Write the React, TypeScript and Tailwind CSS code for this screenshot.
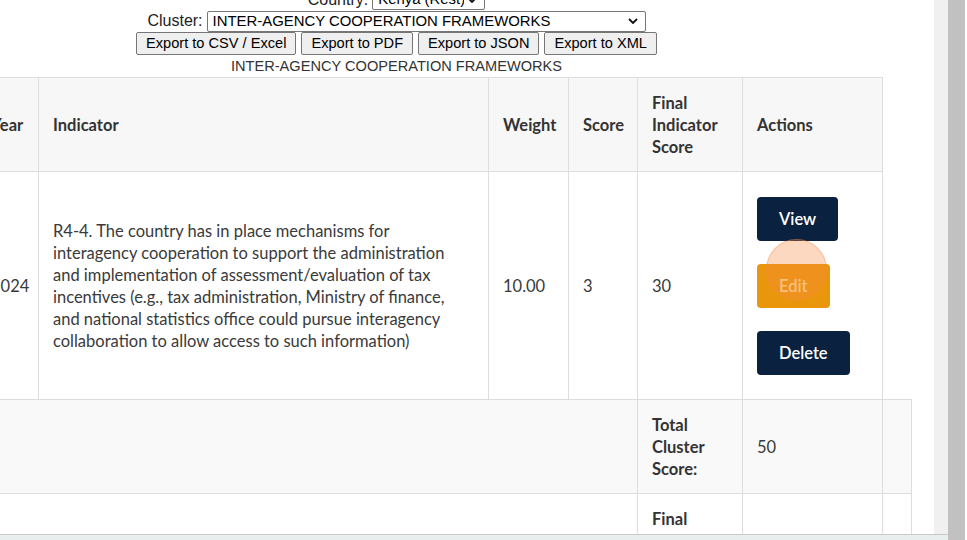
import React from 'react';

const Chevron = () => (
    <svg width="10" height="6" viewBox="0 0 10 6" className="shrink-0">
        <polyline points="1,1 5,5 9,1" fill="none" stroke="#111" strokeWidth="1.8" />
    </svg>
);

const FakeSelect = ({ label, width }: { label: string; width: string }) => (
    <div className={`${width} h-[21px] flex items-center justify-between gap-[3px] border border-[#767676] rounded-[2px] bg-white pl-[5px] pr-[7px] text-[14.9px] text-black`}>
        <span className="whitespace-nowrap overflow-hidden">{label}</span>
        <Chevron />
    </div>
);

const ExportButton = ({ children }: { children: React.ReactNode }) => (
    <button className="h-[23px] px-[9px] border border-[#767676] rounded-[2px] bg-[#efefef] text-[14.6px] text-black leading-none">
        {children}
    </button>
);

const ActionButton = ({ children, tone }: { children: React.ReactNode; tone: 'navy' | 'orange' }) => (
    <button
        className={
            tone === 'navy'
                ? 'h-[44px] px-[22px] rounded-[4px] bg-[#0a2240] text-white font-semibold self-start'
                : 'relative h-[44px] px-[22px] rounded-[4px] bg-[#e9960d] text-[#fbdc9c] font-semibold self-start'
        }
    >
        {children}
        {tone === 'orange' && (
            <span className="absolute left-[9px] top-[-25px] w-[61px] h-[61px] rounded-full bg-[rgba(249,138,64,0.33)] border border-[rgba(240,140,70,0.35)]" />
        )}
    </button>
);

const th = 'border border-[#dddddd] px-[14px] pt-[14px] pb-[13px] text-left align-middle font-bold text-[#333]';
const td = 'border border-[#dddddd] px-[14px] pt-[14px] pb-[13px] align-middle';

export default function App() {
    return (
        <div className="w-[967px] h-[540px] overflow-hidden bg-white flex">
            <div className="w-[948px] flex flex-col">
                <div className="h-[534px] flex">
                    <div className="w-[934px] overflow-hidden">
                        <div className="mt-[-11px] font-['Liberation_Sans',Arial,sans-serif] text-[16px] text-[#222]">
                            <div className="w-[793px] flex flex-col items-center">
                                <div className="h-[21px] flex items-center gap-[4px]">
                                    <span>Country:</span>
                                    <FakeSelect label="Kenya (Rest)" width="w-[113px]" />
                                </div>
                                <div className="h-[22px] flex items-center gap-[4px]">
                                    <span>Cluster:</span>
                                    <FakeSelect label="INTER-AGENCY COOPERATION FRAMEWORKS" width="w-[439px]" />
                                </div>
                                <div className="h-[23px] flex items-center gap-[5px]">
                                    <ExportButton>Export to CSV / Excel</ExportButton>
                                    <ExportButton>Export to PDF</ExportButton>
                                    <ExportButton>Export to JSON</ExportButton>
                                    <ExportButton>Export to XML</ExportButton>
                                </div>
                                <div className="h-[23px] flex items-center text-[14.6px] text-[#333]">
                                    INTER-AGENCY COOPERATION FRAMEWORKS
                                </div>
                            </div>
                            <table className="ml-[-24px] mt-[-1px] w-[935px] table-fixed border-collapse font-['Lato','Open_Sans',sans-serif] text-[16.5px] leading-[22px] text-[#3a3a3a]">
                                <colgroup>
                                    <col className="w-[62px]" />
                                    <col className="w-[450px]" />
                                    <col className="w-[80px]" />
                                    <col className="w-[69px]" />
                                    <col className="w-[105px]" />
                                    <col className="w-[140px]" />
                                    <col className="w-[29px]" />
                                </colgroup>
                                <thead>
                                    <tr className="bg-[#f7f7f7]">
                                        <th className={th}>Year</th>
                                        <th className={th}>Indicator</th>
                                        <th className={th}>Weight</th>
                                        <th className={th}>Score</th>
                                        <th className={th}>Final Indicator Score</th>
                                        <th className={th}>Actions</th>
                                    </tr>
                                </thead>
                                <tbody>
                                    <tr>
                                        <td className={td}>2024</td>
                                        <td className={td}>
                                            R4-4. The country has in place mechanisms for<br />
                                            interagency cooperation to support the administration<br />
                                            and implementation of assessment/evaluation of tax<br />
                                            incentives (e.g., tax administration, Ministry of finance,<br />
                                            and national statistics office could pursue interagency<br />
                                            collaboration to allow access to such information)
                                        </td>
                                        <td className={td}>10.00</td>
                                        <td className={td}>3</td>
                                        <td className={td}>30</td>
                                        <td className={td}>
                                            <div className="my-[11px] flex flex-col gap-[23px]">
                                                <ActionButton tone="navy">View</ActionButton>
                                                <ActionButton tone="orange">Edit</ActionButton>
                                                <ActionButton tone="navy">Delete</ActionButton>
                                            </div>
                                        </td>
                                    </tr>
                                    <tr className="bg-[#f9f9f9]">
                                        <td className={td} colSpan={4}></td>
                                        <td className={`${td} font-bold text-[#333]`}>Total Cluster Score:</td>
                                        <td className={td}>50</td>
                                        <td className={td}></td>
                                    </tr>
                                    <tr>
                                        <td className={td} colSpan={4}></td>
                                        <td className={`${td} font-bold text-[#333]`}>Final Cluster Score:</td>
                                        <td className={td}></td>
                                        <td className={td}></td>
                                    </tr>
                                </tbody>
                            </table>
                        </div>
                    </div>
                    <div className="w-[14px] bg-[#f0f0f0]" />
                </div>
                <div className="h-[6px] border-t border-[#c8c8c8] bg-[#e8eeee]" />
            </div>
            <div className="w-[17px] bg-[#c1c1c1]" />
            <div className="w-[2px] bg-white" />
        </div>
    );
}
